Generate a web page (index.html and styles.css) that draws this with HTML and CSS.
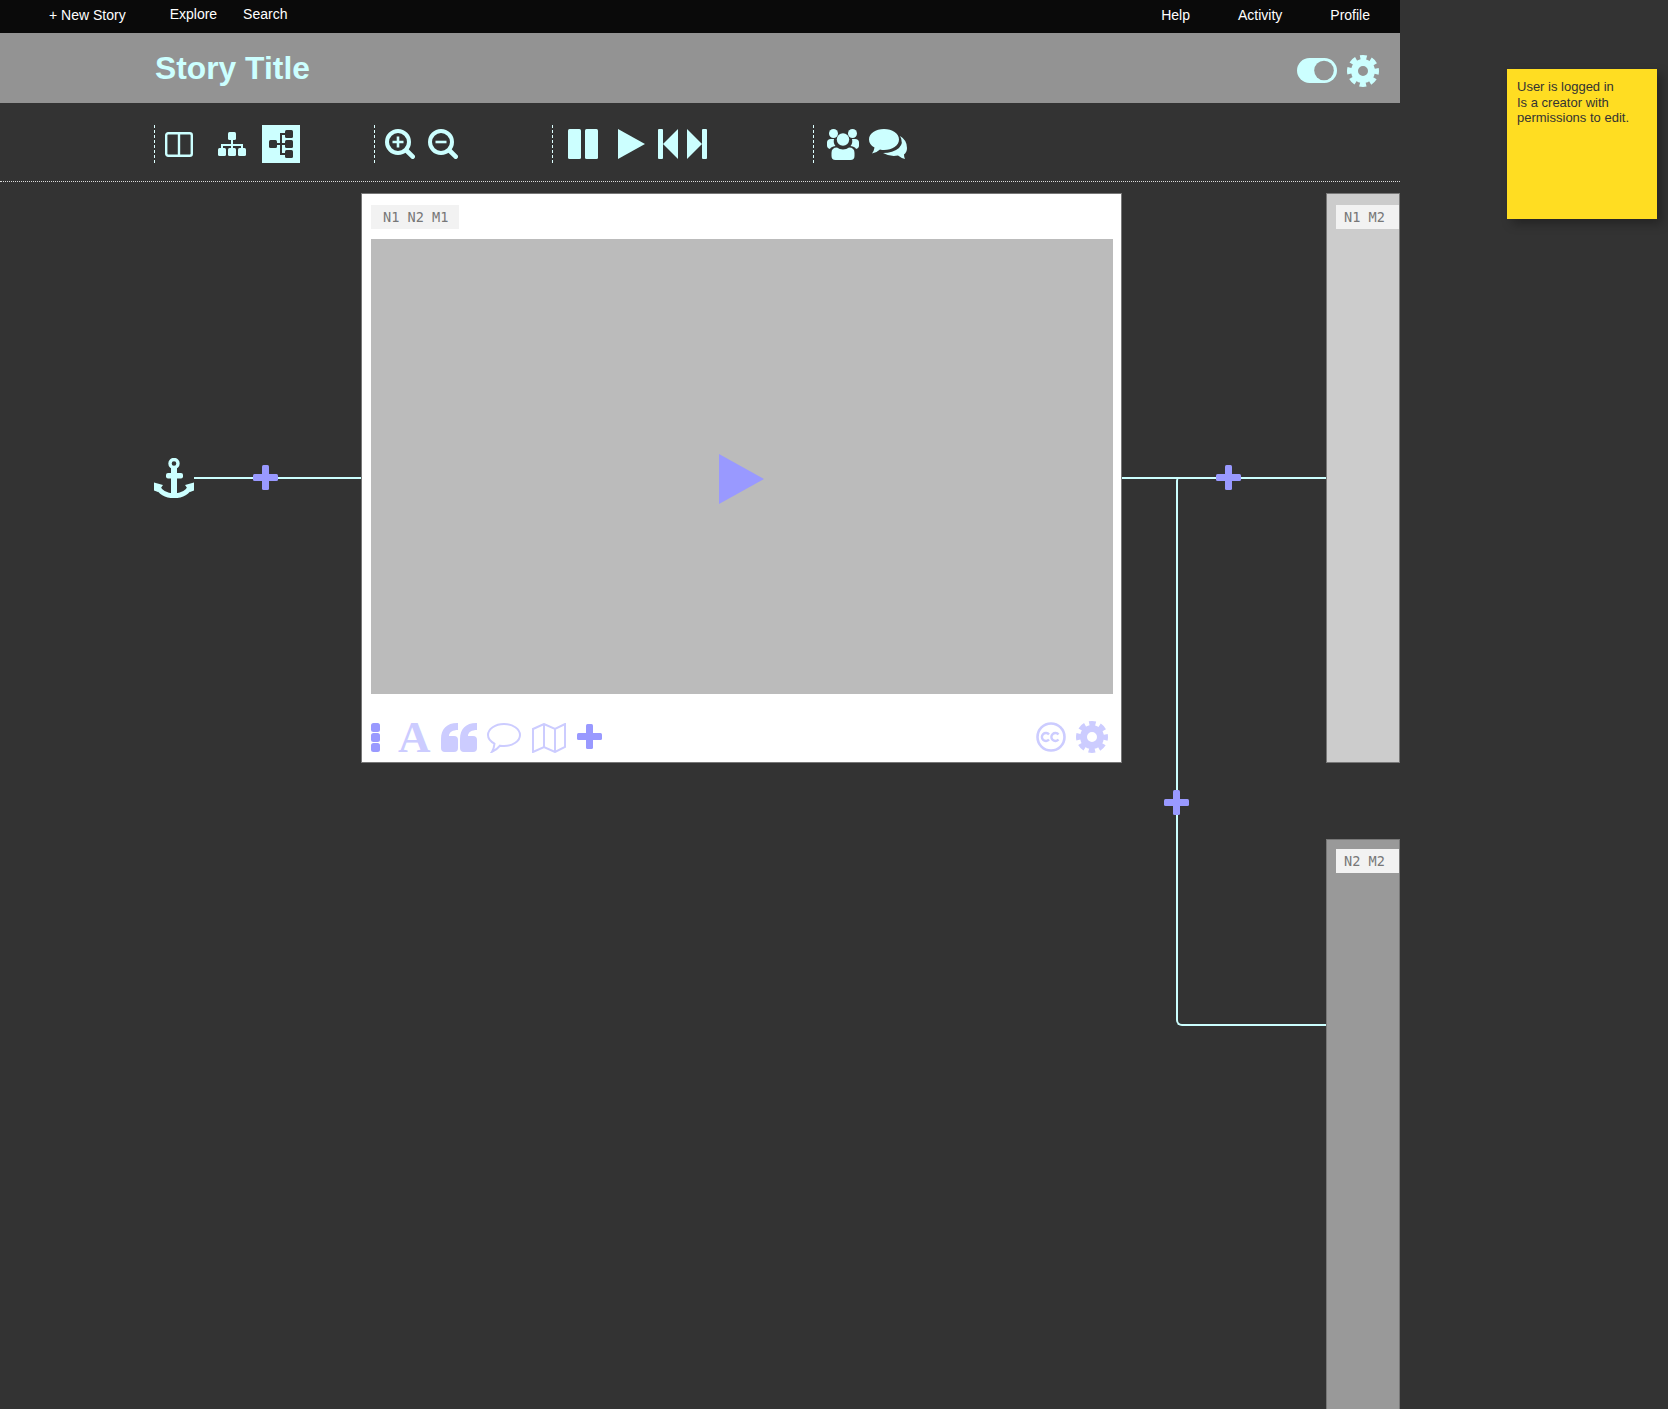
FILE: index.html
```html
<!DOCTYPE html>
<html lang="en">
<head>
    <meta charset="UTF-8">
    <title>Story Editor</title>
    <link rel="stylesheet" href="styles.css">
</head>
<body>
    <svg class="icon-defs" aria-hidden="true">
        <symbol id="gear" viewBox="0 0 32 32">
            <circle cx="16" cy="16" r="8.5" fill="none" stroke="currentColor" stroke-width="7"/>
            <circle cx="16" cy="16" r="13.5" fill="none" stroke="currentColor" stroke-width="5" stroke-dasharray="6.4 4.2" stroke-dashoffset="3.2"/>
        </symbol>
        <symbol id="plus" viewBox="0 0 25 25">
            <rect x="9" y="0" width="7" height="25" rx="1.5"/>
            <rect x="0" y="9" width="25" height="7" rx="1.5"/>
        </symbol>
    </svg>

    <div class="page">
        <nav class="topbar">
            <a class="nav-new">+ New Story</a>
            <a class="nav-explore nav-high">Explore</a>
            <a class="nav-high">Search</a>
            <div class="nav-right">
                <a>Help</a>
                <a>Activity</a>
                <a>Profile</a>
            </div>
        </nav>

        <header class="story-header">
            <h1>Story Title</h1>
            <div class="story-controls">
                <svg width="40" height="25" viewBox="0 0 40 25">
                    <rect width="40" height="25" rx="12.5" fill="#ccffff"/>
                    <circle cx="27" cy="12.5" r="9.8" fill="#939393"/>
                </svg>
                <svg class="gear-top" width="32" height="32"><use href="#gear"/></svg>
            </div>
        </header>

        <div class="toolbar">
            <div class="tool-group group-view">
                <svg class="t-split" width="28" height="25" viewBox="0 0 28 25" fill="none" stroke="#ccffff" stroke-width="2.4">
                    <rect x="1.2" y="1.2" width="25.6" height="22.6" rx="2"/>
                    <path d="M14 1v23"/>
                </svg>
                <svg class="t-sitemap" width="28" height="24" viewBox="0 0 28 24" fill="#ccffff">
                    <rect x="10" y="0" width="8" height="8" rx="1.5"/>
                    <rect x="0" y="16" width="8" height="8" rx="1.5"/>
                    <rect x="10" y="16" width="8" height="8" rx="1.5"/>
                    <rect x="20" y="16" width="8" height="8" rx="1.5"/>
                    <path d="M13 8h2v4h10v4h-2v-2h-8v2h-2v-2H5v2H3v-4h10z"/>
                </svg>
                <div class="tool-active">
                    <svg width="24" height="29" viewBox="0 0 24 29" fill="#333">
                        <rect x="0" y="10" width="8" height="8" rx="1.5"/>
                        <rect x="16" y="0" width="8" height="8" rx="1.5"/>
                        <rect x="16" y="10" width="8" height="8" rx="1.5"/>
                        <rect x="16" y="20" width="8" height="8" rx="1.5"/>
                        <path d="M8 13h3V3h5v2h-3v8h3v2h-3v8h3v2h-5V15H8z"/>
                    </svg>
                </div>
            </div>
            <div class="tool-group group-zoom">
                <svg class="t-zoomin" width="30" height="30" viewBox="0 0 30 30" fill="none" stroke="#ccffff">
                    <circle cx="13" cy="13" r="11" stroke-width="4"/>
                    <path d="M21.5 21.5l6.2 6.2" stroke-width="4.6" stroke-linecap="round"/>
                    <path d="M13 7.5v11M7.5 13h11" stroke-width="2.6"/>
                </svg>
                <svg class="t-zoomout" width="30" height="30" viewBox="0 0 30 30" fill="none" stroke="#ccffff">
                    <circle cx="13" cy="13" r="11" stroke-width="4"/>
                    <path d="M21.5 21.5l6.2 6.2" stroke-width="4.6" stroke-linecap="round"/>
                    <path d="M7.5 13h11" stroke-width="2.6"/>
                </svg>
            </div>
            <div class="tool-group group-play">
                <svg class="t-pause" width="30" height="30" viewBox="0 0 30 30" fill="#ccffff">
                    <rect x="0" y="0" width="13" height="30" rx="1.5"/>
                    <rect x="17" y="0" width="13" height="30" rx="1.5"/>
                </svg>
                <svg class="t-play" width="27" height="30" viewBox="0 0 27 30" fill="#ccffff">
                    <path d="M0 0l27 15L0 30z"/>
                </svg>
                <svg class="t-prev" width="20" height="30" viewBox="0 0 20 30" fill="#ccffff">
                    <rect x="0" y="0" width="5" height="30" rx="1"/>
                    <path d="M5 15L20 0v30z"/>
                </svg>
                <svg class="t-next" width="20" height="30" viewBox="0 0 20 30" fill="#ccffff">
                    <rect x="15" y="0" width="5" height="30" rx="1"/>
                    <path d="M15 15L0 0v30z"/>
                </svg>
            </div>
            <div class="tool-group group-social">
                <svg class="t-users" width="32" height="31" viewBox="0 0 32 31" fill="#ccffff">
                    <circle cx="6.5" cy="4.5" r="4.5"/>
                    <circle cx="25.5" cy="4.5" r="4.5"/>
                    <path d="M0 17v-3.500q0-3.500 4-3.500h3q-1 4 1.500 7q-5 1-5.500 3q-3-1-3-3.500z"/>
                    <path d="M32 17v-3.500q0-3.500-4-3.500h-3q1 4-1.500 7q5 1 5.500 3q3-1 3-3.500z"/>
                    <circle cx="16" cy="10.500" r="6.200"/>
                    <path d="M4.500 27v-3q0-5.500 5.500-5.500q2.500 2 6 2q3.500 0 6-2q5.500 0 5.500 5.500v3q0 4-4 4h-15q-4 0-4-4z"/>
                </svg>
                <svg class="t-comments" width="38" height="31" viewBox="0 0 38 31" fill="#ccffff">
                    <path d="M31 7q7 4 7 12q0 4-3 6.500q0 2.500 1 4.500q-4-1-7-3.500q-8 1.500-15-2.500q10 0 16-5q5-5 1-12z"/>
                    <path d="M15 0c8.300 0 15 4.500 15 10.500s-6.700 10.500-15 10.500q-2 0-4-.500q-3 3-8 4q2-2.500 2.500-6q-5.500-3-5.500-8c0-6 6.700-10.500 15-10.500z"/>
                </svg>
            </div>
        </div>

        <main class="canvas">
            <svg class="anchor" width="40" height="40" viewBox="0 0 40 40" fill="#ccffff">
                <circle cx="20" cy="5.500" r="4" fill="none" stroke="#ccffff" stroke-width="3.400"/>
                <rect x="12" y="15" width="17" height="5.500" rx="2"/>
                <rect x="17" y="9" width="6" height="30"/>
                <path d="M3.500 28q4 9.700 16.500 9.700t16.500-9.700" fill="none" stroke="#ccffff" stroke-width="4.600"/>
                <path d="M0 24.500l9 2.500l-5 7l-4-1.500zM40 24.500l-9 2.500l5 7l4-1.500z"/>
            </svg>
            <div class="link link-in"></div>
            <div class="link link-out"></div>
            <div class="link-elbow"></div>
            <svg class="plus-node plus-in" width="25" height="25"><use href="#plus"/></svg>
            <svg class="plus-node plus-out" width="25" height="25"><use href="#plus"/></svg>
            <svg class="plus-node plus-branch" width="25" height="25"><use href="#plus"/></svg>

            <section class="node node-main">
                <span class="node-label">N1 N2 M1</span>
                <div class="node-media">
                    <svg width="45" height="50" viewBox="0 0 45 50" fill="#9999ff"><path d="M0 0l45 25L0 50z"/></svg>
                </div>
                <div class="node-tools">
                    <svg class="f-low" width="9" height="29" viewBox="0 0 9 29" fill="#9999ff">
                        <rect width="9" height="9" rx="2.500"/>
                        <rect y="10" width="9" height="9" rx="2.500"/>
                        <rect y="20" width="9" height="9" rx="2.500"/>
                    </svg>
                    <span class="f-text">A</span>
                    <svg class="f-quote f-low" width="36" height="29" viewBox="0 0 36 29" fill="#ccccff">
                        <path d="M0 16C0 6 6 0 16 0h1v7c-5 0-9 2-9 6h5q4 0 4 4v8q0 4-4 4H4q-4 0-4-4z"/>
                        <path d="M19 16C19 6 25 0 35 0h1v7c-5 0-9 2-9 6h5q4 0 4 4v8q0 4-4 4h-9q-4 0-4-4z"/>
                    </svg>
                    <svg class="f-bubble f-low" width="34" height="30" viewBox="0 0 34 30" fill="none" stroke="#ccccff" stroke-width="2">
                        <path d="M17 1c8.800 0 16 4.900 16 11s-7.200 11-16 11q-2 0-4-.300q-3 4-8 6q2-3 2.500-8q-6.500-3.500-6.500-8.700c0-6.100 7.200-11 16-11z"/>
                    </svg>
                    <svg class="f-map f-low" width="34" height="30" viewBox="0 0 34 30" fill="none" stroke="#ccccff" stroke-width="2">
                        <path d="M1 6l11-5l11 5l10-5v23l-10 5l-11-5l-11 5zM12 1v23M23 6v23"/>
                    </svg>
                    <svg class="f-plus" width="25" height="25"><use href="#plus"/></svg>
                    <svg class="f-cc" width="30" height="30" viewBox="0 0 30 30" fill="none" stroke="#ccccff">
                        <circle cx="15" cy="15" r="13.500" stroke-width="2.600"/>
                        <path d="M13 12.500a4 4 0 1 0 0 5M22.500 12.500a4 4 0 1 0 0 5" stroke-width="2.400"/>
                    </svg>
                    <svg class="f-gear" width="32" height="32"><use href="#gear"/></svg>
                </div>
            </section>

            <section class="node node-side node-light">
                <span class="node-label">N1 M2</span>
            </section>
            <section class="node node-side node-dark">
                <span class="node-label">N2 M2</span>
            </section>
        </main>
    </div>

    <aside class="sticky-note">
        User is logged in<br>
        Is a creator with permissions to edit.
    </aside>
</body>
</html>
```

FILE: styles.css
```css
body {
    margin: 0;
    background-color: #333;
    font-family: "Liberation Sans", Arial, sans-serif;
    color: #fff;
    overflow: hidden;
}
svg {
    display: block;
    flex: none;
}
.icon-defs {
    position: absolute;
    width: 0;
    height: 0;
}
.page {
    width: 1400px;
}

/* top nav */
.topbar {
    display: flex;
    align-items: center;
    height: 33px;
    padding: 0 30px 3px 49px;
    box-sizing: border-box;
    background-color: #0a0a0a;
    font-size: 14px;
}
.nav-new {
    margin-right: 44px;
}
.nav-explore {
    margin-right: 26px;
}
.nav-high {
    margin-top: -2px;
}
.nav-right {
    display: flex;
    gap: 48px;
    margin-left: auto;
}

/* story header */
.story-header {
    display: flex;
    align-items: center;
    justify-content: space-between;
    height: 70px;
    padding: 0 21px 0 155px;
    box-sizing: border-box;
    background-color: #939393;
}
.story-header h1 {
    margin: 0;
    font-size: 31.8px;
    color: #ccffff;
}
.story-controls {
    display: flex;
    align-items: center;
    gap: 10px;
    margin-top: 5px;
}
.gear-top {
    color: #ccffff;
}

/* toolbar */
.toolbar {
    display: flex;
    align-items: flex-start;
    height: 79px;
    padding: 22px 0 0 154px;
    box-sizing: border-box;
    border-bottom: 1px dotted #ddd;
}
.tool-group {
    display: flex;
    align-items: center;
    height: 38px;
    border-left: 1px dashed #ddffff;
}
.group-view {
    width: 219px;
}
.group-zoom {
    width: 177px;
}
.group-play {
    width: 260px;
}
.t-split {
    margin-left: 10px;
}
.t-sitemap {
    margin-left: 25px;
}
.tool-active {
    display: flex;
    align-items: center;
    justify-content: center;
    width: 38px;
    height: 38px;
    margin-left: 16px;
    background-color: #ccffff;
}
.t-zoomin {
    margin-left: 10px;
}
.t-zoomout {
    margin-left: 13px;
}
.t-pause {
    margin-left: 15px;
}
.t-play {
    margin-left: 20px;
}
.t-prev {
    margin-left: 13px;
}
.t-next {
    margin-left: 9px;
}
.t-users {
    margin-left: 13px;
}
.t-comments {
    margin-left: 10px;
}

/* story canvas */
.canvas {
    position: relative;
    height: 1227px;
    overflow: hidden;
}
.anchor {
    position: absolute;
    left: 154px;
    top: 276px;
}
.link {
    position: absolute;
    top: 295px;
    height: 2px;
    background-color: #ccffff;
}
.link-in {
    left: 194px;
    width: 167px;
}
.link-out {
    left: 1122px;
    width: 205px;
}
.link-elbow {
    position: absolute;
    left: 1176px;
    top: 296px;
    width: 150px;
    height: 546px;
    border-left: 2px solid #ccffff;
    border-bottom: 2px solid #ccffff;
    border-radius: 3px 0 0 6px;
}
.plus-node {
    position: absolute;
    fill: #9999ff;
}
.plus-in {
    left: 253px;
    top: 283px;
}
.plus-out {
    left: 1216px;
    top: 283px;
}
.plus-branch {
    left: 1164px;
    top: 608px;
}

/* nodes */
.node {
    position: absolute;
    box-sizing: border-box;
    border: 1px solid #777;
}
.node-label {
    display: block;
    height: 24px;
    padding-left: 8px;
    background-color: #f2f2f2;
    font-family: "DejaVu Sans Mono", monospace;
    font-size: 13.6px;
    line-height: 25px;
    color: #777;
}
.node-main {
    left: 361px;
    top: 11px;
    width: 761px;
    height: 570px;
    display: flex;
    flex-direction: column;
    padding: 11px 8px 0 9px;
    background-color: #fff;
}
.node-main .node-label {
    align-self: flex-start;
    width: 88px;
    padding-left: 12px;
    box-sizing: border-box;
}
.node-media {
    display: flex;
    align-items: center;
    justify-content: center;
    height: 455px;
    margin-top: 10px;
    padding: 24px 2px 0 0;
    box-sizing: border-box;
    background-color: #bbb;
}
.node-tools {
    display: flex;
    align-items: center;
    flex: 1;
    padding: 17px 5px 0 0;
    color: #ccccff;
    fill: #9999ff;
}
.f-low {
    margin-top: 2px;
}
.f-text {
    margin-left: 18px;
    font-family: "Liberation Serif", serif;
    font-weight: bold;
    font-size: 45px;
    line-height: 30px;
    color: #ccccff;
}
.f-quote {
    margin-left: 10px;
}
.f-bubble {
    margin-left: 10px;
}
.f-map {
    margin-left: 11px;
}
.f-plus {
    margin-left: 11px;
}
.f-cc {
    margin-left: auto;
}
.f-gear {
    margin-left: 10px;
}
.node-side {
    left: 1326px;
    width: 74px;
    padding: 11px 0 0 9px;
}
.node-light {
    top: 11px;
    height: 570px;
    background-color: #ccc;
}
.node-dark {
    top: 657px;
    height: 640px;
    padding-top: 9px;
    background-color: #999;
}

/* annotation */
.sticky-note {
    position: absolute;
    left: 1507px;
    top: 69px;
    width: 150px;
    height: 150px;
    padding: 10px;
    box-sizing: border-box;
    background-color: #ffdd22;
    box-shadow: 5px 5px 10px rgba(0,0,0,0.3);
    color: #333;
    font-size: 13px;
    line-height: 15.5px;
}
```
